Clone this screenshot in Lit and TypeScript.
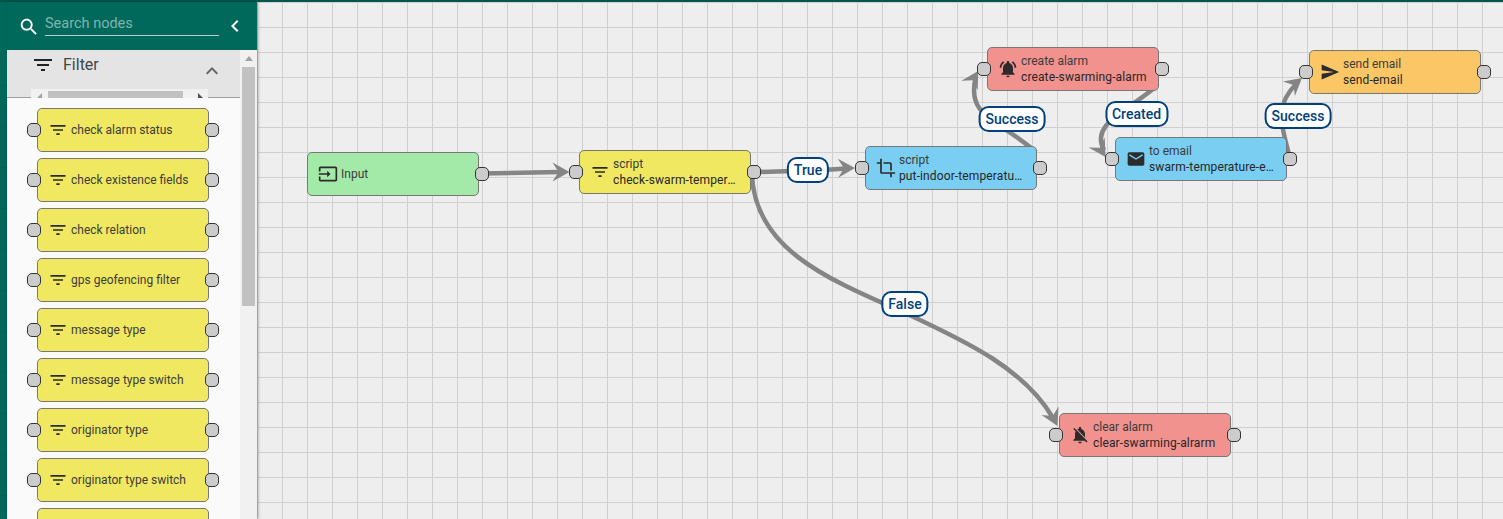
import { LitElement, html, css, svg } from "lit";
import { customElement } from "lit/decorators.js";

const ICONS: Record<string, string> = {
  filter: "M10 18h4v-2h-4v2zM3 6v2h18V6H3zm3 7h12v-2H6v2z",
  input: "M21 3.01H3c-1.1 0-2 .9-2 2V9h2V4.99h18v14.03H3V15H1v4.01c0 1.1.9 1.98 2 1.98h18c1.1 0 2-.88 2-1.98v-14c0-1.11-.9-2-2-2zM11 16l4-4-4-4v3H1v2h10v3z",
  crop: "M17 15h2V7c0-1.1-.9-2-2-2H9v2h8v8zM7 17V1H5v4H1v2h4v10c0 1.1.9 2 2 2h10v4h2v-4h4v-2H7z",
  bell: "M7.58 4.08L6.15 2.65C3.75 4.48 2.17 7.3 2.03 10.5h2c.15-2.65 1.51-4.97 3.55-6.42zm12.39 6.42h2c-.15-3.2-1.73-6.02-4.12-7.85l-1.42 1.43c2.02 1.45 3.39 3.77 3.54 6.42zM18 11c0-3.07-1.64-5.64-4.5-6.32V4c0-.83-.67-1.5-1.5-1.5s-1.5.67-1.5 1.5v.68C7.63 5.36 6 7.92 6 11v5l-2 2v1h16v-1l-2-2v-5zm-6 11c.14 0 .27-.01.4-.04.65-.14 1.18-.58 1.44-1.18.1-.24.15-.5.15-.78h-4c.01 1.1.9 2 2.01 2z",
  mail: "M20 4H4c-1.1 0-1.99.9-1.99 2L2 18c0 1.1.9 2 2 2h16c1.1 0 2-.9 2-2V6c0-1.1-.9-2-2-2zm0 4l-8 5-8-5V6l8 5 8-5v2z",
  send: "M2.01 21L23 12 2.01 3 2 10l15 2-15 2z",
  belloff: "M20 18.69L7.84 6.14 5.27 3.49 4 4.76l2.8 2.8v.01c-.52.99-.8 2.16-.8 3.42v5l-2 2v1h13.73l2 2L21 19.72l-1-1.03zM12 22c1.11 0 2-.89 2-2h-4c0 1.11.89 2 2 2zm6-7.32V11c0-3.08-1.64-5.64-4.5-6.32V4c0-.83-.67-1.5-1.5-1.5s-1.5.67-1.5 1.5v.68c-.15.03-.29.08-.42.12-.1.03-.2.07-.3.11h-.01c-.2.08-.4.18-.59.28-.1.05-.2.12-.3.18l10.12 10.41z",
  search: "M15.5 14h-.79l-.28-.27C15.41 12.59 16 11.11 16 9.5 16 5.91 13.09 3 9.5 3S3 5.91 3 9.5 5.91 16 9.5 16c1.61 0 3.09-.59 4.23-1.57l.27.28v.79l5 4.99L20.49 19l-4.99-5zm-6 0C7.01 14 5 11.99 5 9.5S7.01 5 9.5 5 14 7.01 14 9.5 11.99 14 9.5 14z",
  left: "M15.41 7.41L14 6l-6 6 6 6 1.41-1.41L10.83 12z",
  up: "M12 8l-6 6 1.41 1.41L12 10.83l4.59 4.58L18 14z",
};

const icon = (name: string, cls = "") =>
  html`<svg class="ic ${cls}" viewBox="0 0 24 24"><path d=${ICONS[name]}></path></svg>`;

interface CanvasNode { x: number; y: number; tone: string; ic: string; type: string; name: string; }
const NODES: CanvasNode[] = [
  { x: 307, y: 152, tone: "green", ic: "input", type: "Input", name: "" },
  { x: 579, y: 150, tone: "yellow", ic: "filter", type: "script", name: "check-swarm-temperature" },
  { x: 865, y: 146, tone: "blue", ic: "crop", type: "script", name: "put-indoor-temperature-data" },
  { x: 987, y: 47, tone: "red", ic: "bell", type: "create alarm", name: "create-swarming-alarm" },
  { x: 1115, y: 137, tone: "blue", ic: "mail", type: "to email", name: "swarm-temperature-email" },
  { x: 1309, y: 50, tone: "orange", ic: "send", type: "send email", name: "send-email" },
  { x: 1059, y: 413, tone: "red", ic: "belloff", type: "clear alarm", name: "clear-swarming-alrarm" },
];

const LABELS = [
  { cx: 808, cy: 170, t: "True" },
  { cx: 1012, cy: 119, t: "Success" },
  { cx: 1136.5, cy: 114, t: "Created" },
  { cx: 1298, cy: 116, t: "Success" },
  { cx: 905, cy: 304, t: "False" },
];

const EDGES = [
  "M482 173.5 C 510 173, 540 172.5, 560 172",
  "M755 172 C 790 171.5, 825 170, 846 168.5",
  "M1036 152 C 1000 120, 965 118, 976 76",
  "M1153 89 C 1125 112, 1090 125, 1104 150",
  "M1290 158 C 1280 120, 1275 105, 1297 83",
  "M752 175 C 755 250, 830 280, 905 313 C 970 343, 1025 370, 1053 418",
];

const ARROWS: [number, number, number, number][] = [
  [569.5, 172, 1, 0],
  [855, 168, 1, -0.02],
  [978.2, 70.9, 0.51, -0.86],
  [1105.5, 157, 0.52, 0.85],
  [1302, 78, 0.77, -0.63],
  [1057.5, 426, 0.44, 0.9],
];

const arrowPoints = ([x, y, dx, dy]: [number, number, number, number]) => {
  const L = 17, N = 11, H = 9.5;
  const px = -dy, py = dx;
  const f = (a: number, b: number) => `${x - dx * a + px * b},${y - dy * a + py * b}`;
  return [f(0, 0), f(L, H), f(N, 0), f(L, -H)].join(" ");
};

const PALETTE = [
  "check alarm status",
  "check existence fields",
  "check relation",
  "gps geofencing filter",
  "message type",
  "message type switch",
  "originator type",
  "originator type switch",
  "script",
];

@customElement("app-root")
export class AppRoot extends LitElement {
  static styles = css`
    :host { display: block; height: 519px; overflow: hidden; font-family: Roboto, "Liberation Sans", sans-serif; color: #333; }
    .topbar { height: 2px; background: #00574c; }
    .main { display: flex; height: 517px; }
    .strip {
      width: 7px; flex: none; background-color: #00695c;
      background-image: repeating-linear-gradient(to bottom, transparent 0, transparent 40px, rgba(0,0,0,.07) 40px, rgba(0,0,0,.07) 41px);
      background-position: 0 2px;
    }
    .sidebar {
      width: 250px; flex: none; display: flex; flex-direction: column; position: relative; z-index: 2;
      box-shadow: 1px 0 3px rgba(0,0,0,.35);
    }
    .head { height: 48px; flex: none; background: #00695c; display: flex; align-items: flex-start; box-sizing: border-box; }
    .ic { display: block; fill: currentColor; flex: none; }
    .search-ic { width: 22px; height: 22px; color: #fff; margin: 14px 0 0 11px; }
    .search {
      width: 174px; margin: 5px 0 0 5px; height: 29px; box-sizing: border-box; border-bottom: 1px solid rgba(255,255,255,.7);
      font-size: 14.5px; line-height: 33px; color: rgba(255,255,255,.5);
    }
    .collapse { width: 24px; height: 24px; color: #fff; margin: 12px 0 0 4px; }
    .body { flex: 1; display: flex; min-height: 0; background: #fafafa; }
    .panel { flex: 1; min-width: 0; display: flex; flex-direction: column; position: relative; }
    .group {
      height: 48px; flex: none; box-sizing: border-box; background: #e4e4e4; border-bottom: 1px solid #9e9e9e;
      display: flex; align-items: flex-start; position: relative;
    }
    .group-ic { width: 24px; height: 24px; color: #222; margin: 3px 0 0 24px; }
    .group-title { font-size: 16px; line-height: 24px; margin: 3px 0 0 8px; color: #444; }
    .group-up { width: 24px; height: 24px; color: #666; position: absolute; left: 193px; top: 9px; }
    .hbar { position: absolute; left: 24px; top: 39px; width: 177px; height: 9px; background: #f1f1f1; }
    .hthumb { position: absolute; left: 17px; top: 2px; width: 135px; height: 7px; background: #c1c1c1; }
    .harr { position: absolute; top: 4px; width: 0; height: 0; border-style: solid; border-width: 0 0 5px 5px; border-color: transparent transparent #a3a3a3 transparent; }
    .harr.l { left: 6px; }
    .harr.r { left: 167px; border-width: 5px 0 0 5px; border-color: transparent transparent transparent #505050; }
    .list { flex: 1; overflow: hidden; padding: 10px 0 0 30px; display: flex; flex-direction: column; gap: 6px; }
    .vbar { width: 17px; flex: none; background: #f1f1f1; position: relative; }
    .varr { width: 0; height: 0; margin: 6px auto 0; border-style: solid; border-width: 0 4.5px 5px 4.5px; border-color: transparent transparent #a3a3a3 transparent; }
    .vthumb { width: 13px; height: 239px; margin: 6px auto 0; background: #c1c1c1; }

    .node {
      width: 172px; height: 44px; flex: none; box-sizing: border-box; border: 1px solid #777; border-radius: 5px;
      position: relative; display: flex; align-items: center; font-size: 12px; line-height: 16px;
    }
    .node .ic { width: 20px; height: 20px; margin-left: 10px; color: #2b2b2b; }
    .texts { width: 126px; margin-left: 3px; min-width: 0; }
    .line { white-space: nowrap; overflow: hidden; text-overflow: ellipsis; }
    .line.type { color: #3c3c3c; }
    .line.name { font-weight: 400; letter-spacing: .12px; color: #262626; }
    .green { background: #a3eaa9; }
    .yellow { background: #f1e861; }
    .blue { background: #79cef1; }
    .red { background: #f1928f; }
    .orange { background: #fbc766; }
    .port {
      position: absolute; top: 50%; width: 14px; height: 14px; margin-top: -7px; box-sizing: border-box;
      background: #ccc; border: 1px solid #333; border-radius: 5px;
    }
    .port.in { left: -11px; }
    .port.out { right: -11px; }

    .canvas {
      flex: 1; position: relative; overflow: hidden; background-color: #eee;
      background-image:
        linear-gradient(to right, #d0d0d0 1px, transparent 1px),
        linear-gradient(to bottom, #d0d0d0 1px, transparent 1px);
      background-size: 25px 25px;
    }
    .edges { position: absolute; left: 0; top: 0; width: 1246px; height: 517px; }
    .edges path { fill: none; stroke: #858585; stroke-width: 4.5; }
    .edges polygon { fill: #858585; }
    .at { position: absolute; }
    .label {
      position: absolute; transform: translate(-50%, -50%); height: 26px; box-sizing: border-box;
      padding: 0 5px; background: #fff; border: 2px solid #00417c; border-radius: 10px;
      font-size: 14px; font-weight: 500; line-height: 22px; color: #00417c; white-space: nowrap;
    }
  `;

  private renderNode(ic: string, tone: string, type: string, name: string, inPort = true, single = false, style = "") {
    return html`<div class="node ${tone} ${style ? "at" : ""}" style=${style}>
      ${inPort ? html`<div class="port in"></div>` : ""}
      ${icon(ic)}
      <div class="texts">
        <div class="line type">${type}</div>
        ${single ? "" : html`<div class="line name">${name}</div>`}
      </div>
      <div class="port out"></div>
    </div>`;
  }

  render() {
    return html`
      <div class="topbar"></div>
      <div class="main">
        <div class="strip"></div>
        <aside class="sidebar">
          <div class="head">
            ${icon("search", "search-ic")}
            <div class="search">Search nodes</div>
            ${icon("left", "collapse")}
          </div>
          <div class="body">
            <div class="panel">
              <div class="group">
                ${icon("filter", "group-ic")}
                <div class="group-title">Filter</div>
                ${icon("up", "group-up")}
                <div class="hbar">
                  <div class="harr l"></div>
                  <div class="hthumb"></div>
                  <div class="harr r"></div>
                </div>
              </div>
              <div class="list">
                ${PALETTE.map((p) => this.renderNode("filter", "yellow", p, "", true, true))}
              </div>
            </div>
            <div class="vbar">
              <div class="varr"></div>
              <div class="vthumb"></div>
            </div>
          </div>
        </aside>
        <section class="canvas">
          <svg class="edges" viewBox="257 2 1246 517">
            ${EDGES.map((d) => svg`<path d=${d}></path>`)}
            ${ARROWS.map((a) => svg`<polygon points=${arrowPoints(a)}></polygon>`)}
          </svg>
          ${NODES.map((n) =>
            this.renderNode(n.ic, n.tone, n.type, n.name, n.ic !== "input", n.name === "", `left:${n.x - 257}px;top:${n.y - 2}px`)
          )}
          ${LABELS.map((l) => html`<div class="label" style="left:${l.cx - 257}px;top:${l.cy - 2}px">${l.t}</div>`)}
        </section>
      </div>
    `;
  }
}
